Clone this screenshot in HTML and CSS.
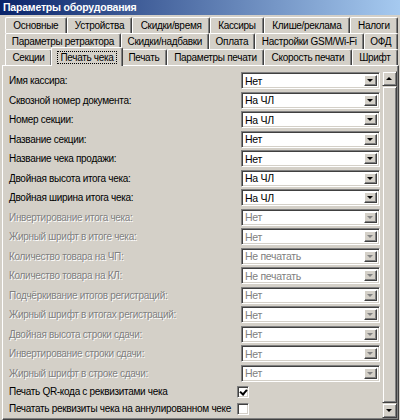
FILE: index.html
```html
<!DOCTYPE html>
<html lang="ru">
<head>
    <meta charset="utf-8">
    <link rel="stylesheet" href="styles.css">
</head>
<body>
    <div class="window">
        <div class="titlebar">Параметры оборудования</div>

        <div class="tabs">
            <div class="tab-row">
                <div class="tab">Основные</div>
                <div class="tab">Устройства</div>
                <div class="tab">Скидки/время</div>
                <div class="tab">Кассиры</div>
                <div class="tab">Клише/реклама</div>
                <div class="tab">Налоги</div>
            </div>
            <div class="tab-row">
                <div class="tab">Параметры ретрактора</div>
                <div class="tab">Скидки/надбавки</div>
                <div class="tab">Оплата</div>
                <div class="tab">Настройки GSM/Wi-Fi</div>
                <div class="tab">ОФД</div>
            </div>
            <div class="tab-row">
                <div class="tab">Секции</div>
                <div class="tab active"><span class="focus">Печать чека</span></div>
                <div class="tab">Печать</div>
                <div class="tab">Параметры печати</div>
                <div class="tab">Скорость печати</div>
                <div class="tab">Шрифт</div>
            </div>
        </div>

        <div class="panel">
            <div class="scroll-box">
                <div class="fields">
                    <div class="field"><span class="label">Имя кассира:</span><div class="combo"><span class="value">Нет</span><span class="combo-btn"></span></div></div>
                    <div class="field"><span class="label">Сквозной номер документа:</span><div class="combo"><span class="value">На ЧЛ</span><span class="combo-btn"></span></div></div>
                    <div class="field"><span class="label">Номер секции:</span><div class="combo"><span class="value">На ЧЛ</span><span class="combo-btn"></span></div></div>
                    <div class="field"><span class="label">Название секции:</span><div class="combo"><span class="value">Нет</span><span class="combo-btn"></span></div></div>
                    <div class="field"><span class="label">Название чека продажи:</span><div class="combo"><span class="value">Нет</span><span class="combo-btn"></span></div></div>
                    <div class="field"><span class="label">Двойная высота итога чека:</span><div class="combo"><span class="value">На ЧЛ</span><span class="combo-btn"></span></div></div>
                    <div class="field"><span class="label">Двойная ширина итога чека:</span><div class="combo"><span class="value">На ЧЛ</span><span class="combo-btn"></span></div></div>
                    <div class="field disabled"><span class="label">Инвертирование итога чека:</span><div class="combo"><span class="value">Нет</span><span class="combo-btn"></span></div></div>
                    <div class="field disabled"><span class="label">Жирный шрифт в итоге чека:</span><div class="combo"><span class="value">Нет</span><span class="combo-btn"></span></div></div>
                    <div class="field disabled"><span class="label">Количество товара на ЧП:</span><div class="combo"><span class="value">Не печатать</span><span class="combo-btn"></span></div></div>
                    <div class="field disabled"><span class="label">Количество товара на КЛ:</span><div class="combo"><span class="value">Не печатать</span><span class="combo-btn"></span></div></div>
                    <div class="field disabled"><span class="label">Подчёркивание итогов регистраций:</span><div class="combo"><span class="value">Нет</span><span class="combo-btn"></span></div></div>
                    <div class="field disabled"><span class="label">Жирный шрифт в итогах регистраций:</span><div class="combo"><span class="value">Нет</span><span class="combo-btn"></span></div></div>
                    <div class="field disabled"><span class="label">Двойная высота строки сдачи:</span><div class="combo"><span class="value">Нет</span><span class="combo-btn"></span></div></div>
                    <div class="field disabled"><span class="label">Инвертирование строки сдачи:</span><div class="combo"><span class="value">Нет</span><span class="combo-btn"></span></div></div>
                    <div class="field disabled"><span class="label">Жирный шрифт в строке сдачи:</span><div class="combo"><span class="value">Нет</span><span class="combo-btn"></span></div></div>

                    <div class="check-row"><span class="label">Печать QR-кода с реквизитами чека</span><span class="checkbox checked"></span></div>
                    <div class="check-row"><span class="label">Печатать реквизиты чека на аннулированном чеке</span><span class="checkbox"></span></div>
                </div>

                <div class="scrollbar">
                    <div class="sb-btn up"></div>
                    <div class="sb-thumb"></div>
                    <div class="sb-btn down"></div>
                </div>
            </div>
        </div>
    </div>
</body>
</html>
```

FILE: styles.css
```css
body {
    margin: 0;
    background-color: #d4d0c8;
    font-family: "Liberation Sans", Arial, sans-serif;
    font-size: 10px;
    letter-spacing: -0.3px;
    color: #000;
}

.window {
    width: 400px;
    height: 420px;
    overflow: hidden;
    background-color: #d4d0c8;
}

.titlebar {
    height: 15px;
    line-height: 14px;
    padding-left: 3px;
    font-size: 10.5px;
    letter-spacing: -0.2px;
    font-weight: bold;
    color: white;
    background: linear-gradient(to right, #0a246a, #a6caf0);
}

/* Tabs */
.tabs {
    padding: 2px 2px 0 5px;
}

.tab-row {
    display: flex;
    height: 16px;
}

.tab {
    flex: 1 1 auto;
    height: 16px;
    box-sizing: border-box;
    padding: 0 4px;
    line-height: 15px;
    text-align: center;
    white-space: nowrap;
    border-top: 1px solid #fff;
    border-left: 1px solid #fff;
    border-right: 1px solid #404040;
    border-radius: 2px 2px 0 0;
    box-shadow: inset -1px 0 0 #808080;
}

.tab.active {
    position: relative;
    z-index: 2;
    height: 19px;
    margin: -2px -2px 0 -1px;
    padding-top: 2px;
    background-color: #d4d0c8;
}

.focus {
    padding: 0 2px;
    outline: 1px dotted #000;
}

/* Panel */
.panel {
    position: relative;
    z-index: 1;
    height: 353px;
    margin: 0 1px 0 2px;
    border-top: 1px solid #fff;
    border-left: 1px solid #fff;
    border-right: 1px solid #404040;
    border-bottom: 1px solid #404040;
    box-shadow: inset -1px -1px 0 #808080;
}

.scroll-box {
    display: flex;
    height: 100%;
    padding: 5px 0 1px 0;
    box-sizing: border-box;
}

.fields {
    flex: 1;
    padding: 0 0 0 6px;
    overflow: hidden;
}

.field {
    display: flex;
    align-items: center;
    justify-content: space-between;
    height: 19.5px;
    padding-right: 2px;
}

.label {
    white-space: nowrap;
}

.disabled .label {
    color: #808080;
    text-shadow: 1px 1px 0 #fff;
}

.disabled .value {
    color: #808080;
}

/* Combo box */
.combo {
    display: flex;
    align-items: center;
    justify-content: space-between;
    width: 139px;
    height: 17px;
    box-sizing: border-box;
    background-color: white;
    border-top: 1px solid #808080;
    border-left: 1px solid #808080;
    border-right: 1px solid #fff;
    border-bottom: 1px solid #fff;
    box-shadow: inset 1px 1px 0 #404040, inset -1px -1px 0 #d4d0c8;
    padding: 2px 2px 2px 3px;
    font-size: 10.5px;
}

.combo-btn {
    position: relative;
    width: 13px;
    height: 11px;
    box-sizing: border-box;
    background-color: #d4d0c8;
    border-top: 1px solid #fff;
    border-left: 1px solid #fff;
    border-right: 1px solid #404040;
    border-bottom: 1px solid #404040;
    box-shadow: inset -1px -1px 0 #808080;
}

.combo-btn::after {
    content: "";
    position: absolute;
    left: 2px;
    top: 3px;
    border-left: 3px solid transparent;
    border-right: 3px solid transparent;
    border-top: 3px solid #000;
}

.disabled .combo-btn::after {
    border-top-color: #808080;
}

/* Check boxes */
.check-row {
    display: flex;
    align-items: center;
    height: 17px;
}

.check-row .label {
    width: 228px;
    flex: none;
}

.checkbox {
    position: relative;
    width: 12px;
    height: 12px;
    box-sizing: border-box;
    background-color: white;
    border-top: 1px solid #808080;
    border-left: 1px solid #808080;
    border-right: 1px solid #fff;
    border-bottom: 1px solid #fff;
    box-shadow: inset 1px 1px 0 #404040, inset -1px -1px 0 #d4d0c8;
}

.checkbox.checked::after {
    content: "";
    position: absolute;
    left: 3px;
    top: 1px;
    width: 3px;
    height: 5px;
    border-right: 2px solid #000;
    border-bottom: 2px solid #000;
    transform: rotate(40deg);
}

/* Scrollbar */
.scrollbar {
    display: flex;
    flex-direction: column;
    width: 15px;
    margin-right: 1px;
}

.sb-btn,
.sb-thumb {
    position: relative;
    box-sizing: border-box;
    background-color: #d4d0c8;
    border-top: 1px solid #d4d0c8;
    border-left: 1px solid #d4d0c8;
    border-right: 1px solid #404040;
    border-bottom: 1px solid #404040;
    box-shadow: inset 1px 1px 0 #fff, inset -1px -1px 0 #808080;
}

.sb-btn {
    height: 15px;
    flex: none;
}

.sb-thumb {
    flex: 1;
}

.sb-btn::after {
    content: "";
    position: absolute;
    left: 3px;
    top: 5px;
    border-left: 3px solid transparent;
    border-right: 3px solid transparent;
}

.sb-btn.up::after {
    border-bottom: 3px solid #000;
}

.sb-btn.down::after {
    border-top: 3px solid #000;
}
```
